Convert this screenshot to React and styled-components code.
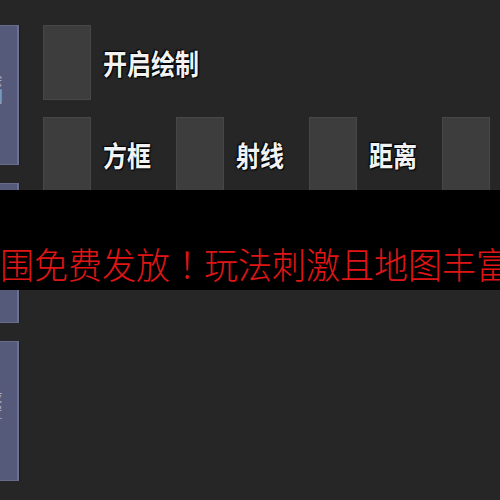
import React from "react";
import styled, { createGlobalStyle } from "styled-components";

const GlobalStyle = createGlobalStyle`
  html, body {
    margin: 0;
    padding: 0;
    background: #262626;
    overflow: hidden;
  }
  body {
    font-family: "Noto Sans CJK SC", "Noto Sans", sans-serif;
  }
`;

const Screen = styled.div`
  position: relative;
  width: 500px;
  height: 500px;
  overflow: hidden;
  background: #262626;
  display: flex;
`;

const Sidebar = styled.div`
  display: flex;
  flex-direction: column;
  gap: 18px;
  padding-top: 25px;
  margin-left: -28px;
  flex-shrink: 0;
`;

const Tab = styled.div`
  width: 47px;
  height: 140px;
  box-sizing: border-box;
  background: #555a7a;
  border: 1px solid #666b8c;
  border-right: 2px solid #6d7294;
  box-shadow: 1px 0 0 #1c1c22;
  display: flex;
  align-items: center;
  justify-content: center;
  color: #a9aec6;
  font-size: 15px;
  writing-mode: vertical-rl;
  letter-spacing: 2px;
  padding-bottom: 12px;
`;

const Content = styled.div`
  display: flex;
  flex-direction: column;
  gap: 17px;
  padding: 25px 0 0 24px;
`;

const Row = styled.div`
  display: flex;
  align-items: center;
  white-space: nowrap;
`;

const Item = styled.div`
  display: flex;
  align-items: center;
  gap: 12px;
  margin-right: ${(p) => (p.$last ? 0 : 25)}px;
  flex-shrink: 0;
`;

const Box = styled.div`
  width: 48px;
  height: 75px;
  box-sizing: border-box;
  background: #3d3d3d;
  border: 1px solid #474747;
  flex-shrink: 0;
`;

const Label = styled.span`
  display: inline-block;
  width: ${(p) => (p.$wide ? "auto" : "48px")};
  color: #f2f2f2;
  font-size: 24px;
  font-weight: 700;
  transform: scaleY(1.2);
  text-shadow: 0 0 2px #000, 1px 1px 1px #000, -1px -1px 1px #000;
`;

const Banner = styled.div`
  position: absolute;
  left: 0;
  right: 0;
  top: 190px;
  height: 100px;
  background: #000;
  overflow: hidden;
  box-sizing: border-box;
  padding-top: 56px;
`;

const Marquee = styled.div`
  color: #e01616;
  font-size: 34px;
  line-height: 34px;
  font-weight: 300;
  white-space: nowrap;
  transform: scaleY(1.08);
  transform-origin: top left;
`;

const Bang = styled.span`
  font-family: "Noto Sans CJK TC", "Noto Sans CJK SC", sans-serif;
`;

const features = ["方框", "射线", "距离", "血量"];

export default function App() {
  return (
    <>
      <GlobalStyle />
      <Screen>
        <Sidebar>
          <Tab>绘制</Tab>
          <Tab>瞄准</Tab>
          <Tab>设置</Tab>
        </Sidebar>
        <Content>
          <Row>
            <Item>
              <Box />
              <Label $wide>开启绘制</Label>
            </Item>
          </Row>
          <Row>
            {features.map((f, i) => (
              <Item key={f} $last={i === features.length - 1}>
                <Box />
                <Label>{f}</Label>
              </Item>
            ))}
          </Row>
          <Row>
            {features.map((f) => (
              <Item key={f}>
                <Box />
              </Item>
            ))}
          </Row>
        </Content>
        <Banner>
          <Marquee>
            围免费发放<Bang>！</Bang>玩法刺激且地图丰富
          </Marquee>
        </Banner>
      </Screen>
    </>
  );
}
